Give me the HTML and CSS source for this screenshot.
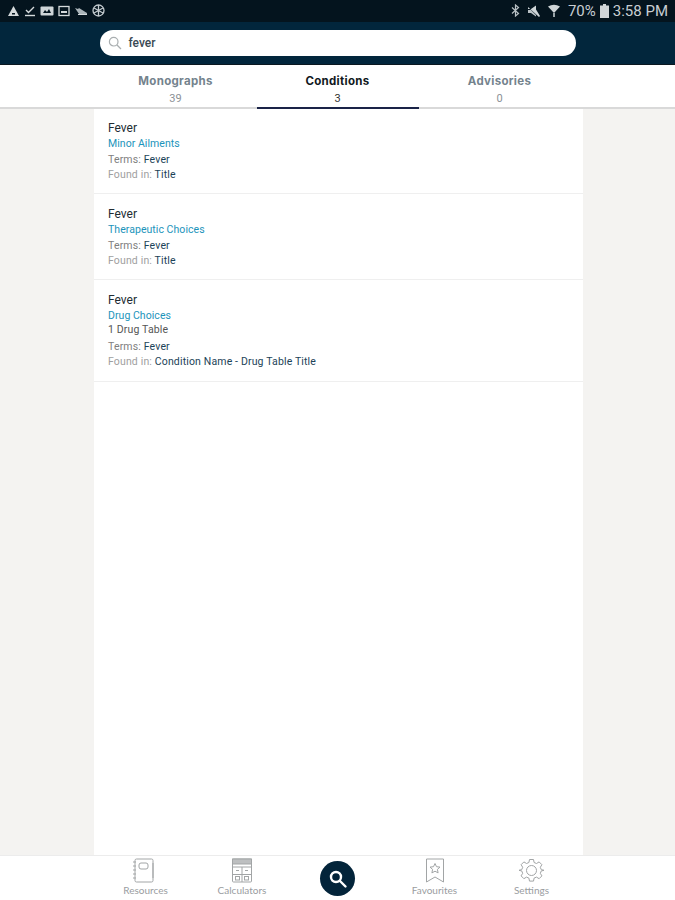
FILE: index.html
```html
<!DOCTYPE html>
<html lang="en">
<head>
  <meta charset="UTF-8">
  <meta name="viewport" content="width=device-width, initial-scale=1.0">
  <title>Search - Conditions</title>
  <link rel="stylesheet" href="styles.css">
</head>
<body>
  <!-- Status bar -->
  <div class="status-bar">
    <div class="status-icons">
      <svg width="13" height="12" viewBox="0 0 13 12"><path d="M6.500 1 12 11H1z" fill="#d5dadc"/><path d="M5 8h3v1.500H5z" fill="#04151f"/></svg>
      <svg width="12" height="12" viewBox="0 0 12 12" fill="none" stroke="#d5dadc" stroke-width="1.400"><path d="M2 5l2.500 2.500L10 2"/><path d="M1 10.500h10"/></svg>
      <svg width="14" height="12" viewBox="0 0 14 12"><rect x="0.500" y="1.500" width="13" height="9" rx="1" fill="#cfd5d8"/><path d="M3 8l2-3 2 2 2-3 2 4z" fill="#04151f"/></svg>
      <svg width="12" height="12" viewBox="0 0 12 12"><rect x="1" y="1.500" width="10" height="9" fill="none" stroke="#d5dadc" stroke-width="1.300"/><rect x="3" y="6" width="6" height="2" fill="#d5dadc"/></svg>
      <svg width="14" height="12" viewBox="0 0 14 12"><path d="M1 3l3 1 1-1 8 5v1H5z" fill="#aab4b9"/><path d="M4 9h9v1H4z" fill="#d5dadc"/></svg>
      <svg width="13" height="13" viewBox="0 0 13 13" fill="none" stroke="#c4cbcf" stroke-width="1.300"><circle cx="6.500" cy="6.500" r="5.500"/><path d="M2 4l9 5M11 4l-9 5M6.500 1v11"/></svg>
    </div>
    <div class="status-right">
      <svg width="9" height="13" viewBox="0 0 9 13" fill="none" stroke="#b9c1c5" stroke-width="1.200"><path d="M1 3.500l6.500 6L4.500 12V1l3 2.500-6.500 6"/></svg>
      <svg width="14" height="12" viewBox="0 0 14 12"><path d="M1 4h3l5-3.500v4L13 11l-1 1L1 2z" fill="#cfd5d8"/><path d="M1 5h3l5 5v1.500L4 8H1z" fill="#b9c1c5"/></svg>
      <svg class="wifi" width="12" height="14" viewBox="0 0 12 14"><path d="M0 2.500Q6-1 12 2.500L6 9z" fill="#cfd5d8"/><path d="M5 9h2v4H5z" fill="#9aa5aa"/></svg>
      <span class="status-pct">70%</span>
      <svg class="battery" width="9" height="14" viewBox="0 0 9 14"><path d="M3 0h3v1.500h3V14H0V1.500h3z" fill="#cfd5d8"/></svg>
      <span class="status-time">3:58 PM</span>
    </div>
  </div>

  <!-- Search header -->
  <header class="search-head">
    <div class="search-box">
      <svg width="14" height="14" viewBox="0 0 14 14" fill="none" stroke="#a9aeb0" stroke-width="1.200"><circle cx="5.700" cy="5.700" r="4.300"/><path d="M9 9l4 4"/></svg>
      <span>fever</span>
    </div>
  </header>

  <!-- Tabs -->
  <nav class="tabs">
    <div class="tab"><b>Monographs</b><span>39</span></div>
    <div class="tab active"><b>Conditions</b><span>3</span></div>
    <div class="tab"><b>Advisories</b><span>0</span></div>
  </nav>

  <!-- Results -->
  <main class="results">
    <div class="result">
      <h3>Fever</h3>
      <a href="#">Minor Ailments</a>
      <p>Terms: <em>Fever</em></p>
      <p class="found">Found in: <em>Title</em></p>
    </div>
    <div class="result">
      <h3>Fever</h3>
      <a href="#">Therapeutic Choices</a>
      <p>Terms: <em>Fever</em></p>
      <p class="found">Found in: <em>Title</em></p>
    </div>
    <div class="result tall">
      <h3>Fever</h3>
      <a href="#">Drug Choices</a>
      <p class="count">1 Drug Table</p>
      <p>Terms: <em>Fever</em></p>
      <p class="found">Found in: <em>Condition Name - Drug Table Title</em></p>
    </div>
  </main>

  <!-- Bottom nav -->
  <footer class="bottom-nav">
    <a class="nav-item resources" href="#">
      <svg width="24" height="25" viewBox="0 0 24 25" fill="none" stroke="#a2a5a6" stroke-width="1"><rect x="3" y="1" width="18" height="23" rx="1.500"/><rect x="7" y="5" width="9" height="6" rx="2"/><path d="M1 4h3M1 8h3M1 12h3M1 16h3M1 20h3M21 5v15"/></svg>
      <span>Resources</span>
    </a>
    <a class="nav-item calculators" href="#">
      <svg width="22" height="25" viewBox="0 0 22 25" fill="none" stroke="#a2a5a6" stroke-width="1"><rect x="1.500" y="1" width="19" height="23" rx="1"/><rect x="1.500" y="1" width="19" height="5" fill="#bdbfc0"/><path d="M1.500 9h19M11 9v15M1.500 16.500h19"/><rect x="4.500" y="18.500" width="4" height="3.500"/><rect x="13.500" y="18.500" width="4" height="3.500"/><path d="M5 12.500h3M14 12.500h3"/></svg>
      <span>Calculators</span>
    </a>
    <a class="nav-search" href="#">
      <svg width="20" height="20" viewBox="0 0 20 20" fill="none" stroke="#fff" stroke-width="2.400"><circle cx="8" cy="8" r="5"/><path d="M12 12l5.500 5.500" stroke-linecap="round"/></svg>
    </a>
    <a class="nav-item" href="#">
      <svg width="20" height="25" viewBox="0 0 20 25" fill="none" stroke="#a2a5a6" stroke-width="1"><path d="M1.500 1h17v23L10 19l-8.500 5z"/><path d="M10 5.500l1.500 3.200 3.500.4-2.600 2.300.7 3.500L10 13.200l-3.100 1.700.7-3.500L5 9.100l3.500-.4z"/></svg>
      <span>Favourites</span>
    </a>
    <a class="nav-item" href="#">
      <svg width="25" height="25" viewBox="0 0 25 25" fill="none" stroke="#a2a5a6" stroke-width="1"><circle cx="12.500" cy="12.500" r="5"/><path d="M10.500 1.500h4l.6 3 2.400 1 2.600-1.600 2.800 2.800-1.600 2.600 1 2.400 3 .6-3 .6-1 2.400 1.600 2.600-2.800 2.800-2.600-1.600-2.400 1-.6 3h-4l-.6-3-2.400-1-2.600 1.600-2.800-2.800 1.600-2.600-1-2.400-3-.6 3-.6 1-2.400-1.600-2.600 2.800-2.800 2.600 1.600 2.400-1z"/></svg>
      <span>Settings</span>
    </a>
  </footer>
</body>
</html>
```

FILE: styles.css
```css
* {
  margin: 0;
  padding: 0;
  box-sizing: border-box;
}

body {
  width: 675px;
  height: 900px;
  display: flex;
  flex-direction: column;
  background-color: #f4f3f1;
  font-family: Roboto, sans-serif;
  overflow: hidden;
}

/* Status bar */
.status-bar {
  height: 22px;
  flex: none;
  display: flex;
  justify-content: space-between;
  align-items: center;
  padding: 0 7px 1px 7px;
  background-color: #04141e;
  color: #c8ced2;
}

.status-icons,
.status-right {
  display: flex;
  align-items: center;
}

.status-icons {
  gap: 4px;
}

.status-right {
  font-size: 15px;
}

.status-right svg {
  margin-right: 7px;
}

.status-right .wifi {
  margin-right: 8px;
}

.status-right .battery {
  margin: 0 4px 0 4px;
}

/* Search header */
.search-head {
  height: 43px;
  flex: none;
  display: flex;
  justify-content: center;
  align-items: center;
  background-color: #02263c;
  border-bottom: 1px solid #0b1820;
}

.search-box {
  width: 476px;
  height: 26px;
  display: flex;
  align-items: center;
  gap: 7px;
  padding-left: 8px;
  background-color: #fff;
  border-radius: 13px;
  font-size: 12px;
  font-weight: 500;
  color: #3a4a54;
}

/* Tabs */
.tabs {
  height: 44px;
  flex: none;
  display: flex;
  justify-content: center;
  background-color: #fff;
  border-bottom: 2px solid #d9d9d9;
}

.tab {
  width: 162px;
  height: 44px;
  padding-top: 9px;
  display: flex;
  flex-direction: column;
  align-items: center;
  gap: 4px;
  color: #74838d;
}

.tab b {
  font-family: Inter, sans-serif;
  font-size: 11.500px;
  font-weight: 700;
  letter-spacing: 0.3px;
}

.tab span {
  font-size: 11px;
  color: #8b9196;
}

.tab.active {
  border-bottom: 2px solid #1a2347;
}

.tab.active b {
  color: #11181d;
}

.tab.active span {
  color: #333;
}

/* Results */
.results {
  flex: 1;
  width: 489px;
  margin: 0 0 0 94px;
  background-color: #fff;
}

.result {
  padding: 13px 14px 11px;
  border-bottom: 1px solid #efefef;
}

.result:first-child {
  padding-top: 12px;
}

.result.tall {
  padding-bottom: 12px;
}

.result h3 {
  font-size: 12px;
  font-weight: 400;
  line-height: 14px;
  color: #222c33;
  margin-bottom: 2px;
}

.result a {
  display: block;
  font-size: 10.500px;
  line-height: 14px;
  letter-spacing: 0.05px;
  color: #1c94bb;
  text-decoration: none;
  margin-bottom: 2px;
}

.result p {
  font-size: 10.500px;
  line-height: 14px;
  letter-spacing: 0.15px;
  color: #808080;
}

.result .found {
  margin-top: 1px;
  color: #a0a0a0;
}

.result .count {
  color: #555;
  margin: -2px 0 3px;
}

.result em {
  font-style: normal;
  color: #1c4358;
}

/* Bottom nav */
.bottom-nav {
  height: 45px;
  flex: none;
  display: flex;
  justify-content: center;
  align-items: flex-start;
  background-color: #fff;
  border-top: 1px solid #ececec;
}

.nav-item,
.nav-search {
  width: 97px;
  display: flex;
  flex-direction: column;
  align-items: center;
  text-decoration: none;
}

.nav-item {
  padding-top: 2px;
  color: #9a9d9f;
  font-family: Lato, sans-serif;
  font-size: 10px;
  gap: 1px;
}

.resources span {
  margin-left: 4px;
}

.calculators {
  padding-left: 3px;
}

.nav-search {
  width: 35px;
  height: 35px;
  margin: 5px 31px 0;
  justify-content: center;
  background-color: #03243a;
  border-radius: 50%;
}
```
